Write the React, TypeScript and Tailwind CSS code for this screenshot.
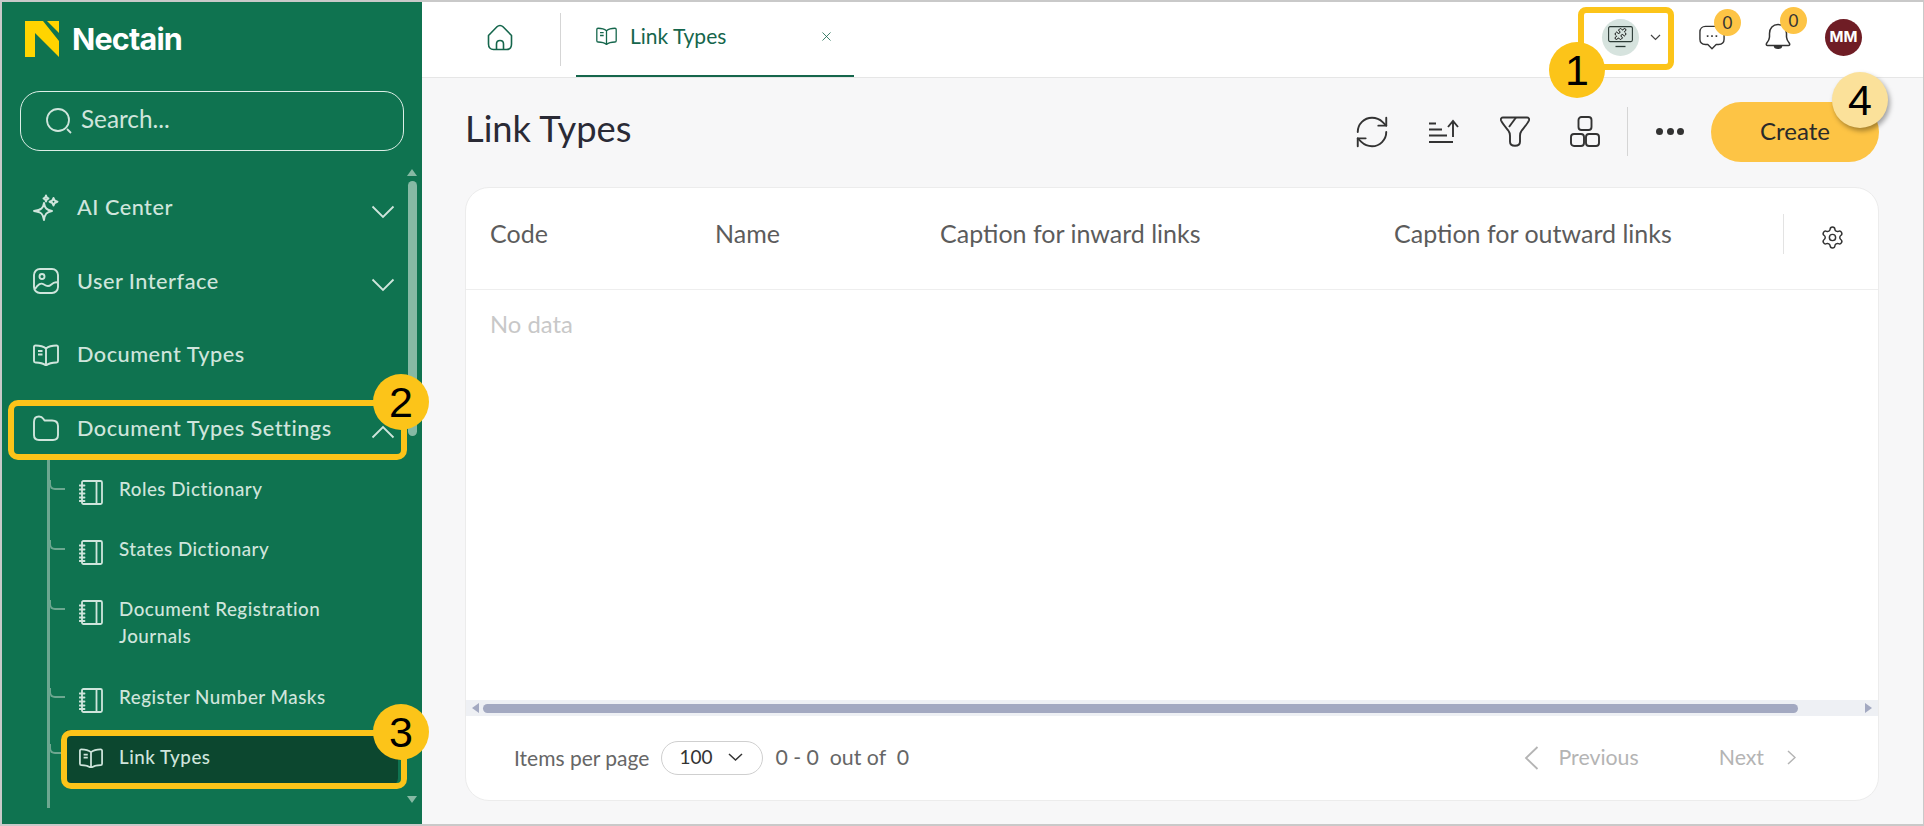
import { Puzzle, RefreshCw, Settings, X } from "lucide-react";
import type { ReactNode } from "react";

const Chevron = ({ up = false }: { up?: boolean }) => (
  <svg width="24" height="14" viewBox="0 0 24 14" fill="none" stroke="currentColor" strokeWidth="1.8" className="shrink-0">
    <path d={up ? "M1.5 12.5 12 2l10.5 10.5" : "M1.5 1.5 12 12 22.5 1.5"} />
  </svg>
);

const Logo = () => (
  <svg width="34" height="36" viewBox="0 0 34 36" className="shrink-0">
    <path d="M0 0h18l16 20v16L10 12v24H0z" fill="#ffd400" />
    <path d="M22 0h12v12z" fill="#ffd400" />
  </svg>
);

const Sparkles = () => (
  <svg width="26" height="28" viewBox="0 0 26 28" fill="none" stroke="currentColor" strokeWidth="1.9" strokeLinejoin="round">
    <path d="M11 9c.8 5 2.600 7 8 8-5.400 1-7.200 3-8 9-.8-6-2.600-8-10-9 7.400-1 9.200-3 10-8z" />
    <path d="M13 1.500c.3 2 1 2.700 2.500 3-1.500.3-2.200 1-2.500 3-.3-2-1-2.700-2.500-3 1.500-.3 2.200-1 2.500-3z" />
    <path d="M20.500 4c.4 2.400 1.200 3.200 4 3.700-2.800.5-3.600 1.300-4 3.800-.4-2.500-1.200-3.300-4-3.800 2.800-.5 3.600-1.300 4-3.700z" />
  </svg>
);

const ImageIcon = () => (
  <svg width="26" height="26" viewBox="0 0 26 26" fill="none" stroke="currentColor" strokeWidth="1.9">
    <rect x="1" y="1" width="24" height="24" rx="6" />
    <circle cx="9" cy="8.500" r="2.500" />
    <path d="M2 21c3-5 6-6.500 9-4.500s5 2 7 .2 4-3.200 6.500-2.200" />
  </svg>
);

const BookIcon = ({ size = 26, stroke = 1.9 }: { size?: number; stroke?: number }) => (
  <svg width={size} height={size * 0.85} viewBox="0 0 26 22" fill="none" stroke="currentColor" strokeWidth={stroke} strokeLinejoin="round" className="shrink-0">
    <path d="M13 4.500C10 2 6 1.500 2.500 1.500 1.500 1.500 1 2 1 3v14c0 1 .5 1.500 1.500 1.500 4 0 7.500.5 10.500 3 3-2.500 6.500-3 10.500-3 1 0 1.500-.5 1.500-1.500V3c0-1-.5-1.500-1.500-1.500-3.500 0-7.500.5-10.500 3zM13 4.500v17" />
    <path d="M5 7h4.500M5 10.500h4.500" />
  </svg>
);

const FolderIcon = () => (
  <svg width="26" height="26" viewBox="0 0 26 26" fill="none" stroke="currentColor" strokeWidth="1.9" strokeLinejoin="round">
    <path d="M1 7c0-3.500 2-5.500 5-5.500 2.500 0 3.500 1 4.500 2.500l1 1.500h7.500c3.500 0 6 2 6 5.500v9c0 3-2 5-5 5H6c-3 0-5-2-5-5z" />
  </svg>
);

const NotebookIcon = () => (
  <svg width="24" height="25" viewBox="0 0 24 25" fill="none" stroke="currentColor" strokeWidth="1.8" strokeLinejoin="round" className="shrink-0">
    <rect x="3" y="1" width="20" height="23" rx="1.500" />
    <path d="M17.500 1v23" />
    <path d="M.500 5.500h5M.500 9.500h5M.500 13.500h5M.500 17.500h5M.500 21h5" strokeLinecap="round" />
  </svg>
);

const Callout = ({ n, className }: { n: string; className: string }) => (
  <div className={`absolute flex h-14 w-14 items-center justify-center rounded-full font-['Liberation_Sans',sans-serif] text-[43px] leading-none text-black ${className}`}>
    {n}
  </div>
);

const NavRow = ({ icon, label, chevron }: { icon: ReactNode; label: string; chevron?: "up" | "down" }) => (
  <div className="flex h-[73.5px] items-center pl-[31px] pr-[12px]">
    <span className="flex w-[44px] shrink-0">{icon}</span>
    <span className="flex-1 text-[21.7px] font-medium tracking-[0.5px]">{label}</span>
    {chevron && (
      <span className="mt-[8px]">
        <Chevron up={chevron === "up"} />
      </span>
    )}
  </div>
);

const SubRow = ({ label, tall, active }: { label: string; tall?: boolean; active?: boolean }) => {
  if (active) {
    return (
      <div className="relative ml-[64px] mr-[9px] mt-[4px] flex h-[56px] items-start rounded-b-lg bg-[#0c472f] pl-[13px] pt-[13px]">
        <span className="absolute -left-[17px] top-[14px] h-[10px] w-[15px] rounded-bl-[6px] border-b-2 border-l-2 border-[#6da790]" />
        <span className="mt-[5px] flex w-[40px] shrink-0">
          <BookIcon size={24} />
        </span>
        <span className="text-[18.800px] font-medium leading-[27px] tracking-[0.5px]">{label}</span>
      </div>
    );
  }
  return (
    <div className={`relative ml-[66px] flex items-start pl-[11px] pt-[17px] ${tall ? "h-[88px]" : "h-[60px]"}`}>
      <span className="absolute -left-[19px] top-[22px] h-[10px] w-[16px] rounded-bl-[6px] border-b-2 border-l-2 border-[#6da790]" />
      <span className="mt-[5px] flex w-[40px] shrink-0">
        <NotebookIcon />
      </span>
      <span className="w-[210px] text-[18.800px] font-medium leading-[27px] tracking-[0.5px]">{label}</span>
    </div>
  );
};

const Sidebar = () => (
  <aside className="flex h-full w-[420px] shrink-0 flex-col bg-[#0f7350] text-[#cfe5dc]">
    <div className="flex h-[89px] shrink-0 items-start gap-[13px] pl-[23px] pt-[19px]">
      <Logo />
      <span className="font-['Inter',sans-serif] text-[30.500px] font-bold leading-[36px] tracking-[-0.8px] text-white">Nectain</span>
    </div>
    <div className="mx-[18px] flex h-[60px] shrink-0 items-center gap-[9px] rounded-[20px] border border-[#dcefe7] pl-[25px]">
      <svg width="26" height="26" viewBox="0 0 26 26" fill="none" stroke="currentColor" strokeWidth="1.800">
        <circle cx="12" cy="12" r="11" />
        <path d="m21 21 4 4" />
      </svg>
      <span className="-mt-[4px] text-[24.300px]">Search...</span>
    </div>
    <div className="mt-[15px] flex h-[642px] shrink-0 overflow-hidden">
      <div className="relative flex-1 overflow-hidden pt-[5px]">
        <span className="absolute left-[45px] top-[294px] h-[400px] w-[3px] bg-[#6da790]" />
        <NavRow icon={<Sparkles />} label="AI Center" chevron="down" />
        <NavRow icon={<ImageIcon />} label="User Interface" chevron="down" />
        <NavRow icon={<BookIcon />} label="Document Types" />
        <NavRow icon={<FolderIcon />} label="Document Types Settings" chevron="up" />
        <div className="-mt-[7px]">
          <SubRow label="Roles Dictionary" />
          <SubRow label="States Dictionary" />
          <SubRow tall label="Document Registration Journals" />
          <SubRow label="Register Number Masks" />
          <SubRow active label="Link Types" />
          <SubRow label="" />
        </div>
      </div>
      <div className="flex w-[15px] shrink-0 flex-col items-center pr-[5px] pt-[3px]">
        <span className="h-0 w-0 border-x-[5px] border-b-[7px] border-x-transparent border-b-[#86b9a4]" />
        <span className="mt-[5px] h-[255px] w-[9px] rounded-full bg-[#86b9a4]" />
        <span className="mt-[360px] h-0 w-0 border-x-[5px] border-t-[7px] border-x-transparent border-t-[#86b9a4]" />
      </div>
    </div>
  </aside>
);

const Badge = () => (
  <span className="absolute -right-[16px] -top-[16px] flex h-[27px] w-[27px] items-center justify-center rounded-full bg-[#fdc445] text-[17px] leading-none text-[#333]">0</span>
);

const Header = () => (
  <header className="flex h-[76px] shrink-0 items-stretch border-b border-[#e6e6e6] bg-white">
    <div className="flex w-[138px] items-center justify-center pb-[5px] pl-[26px] pr-[8px]">
      <svg width="26" height="27" viewBox="0 0 26 27" fill="none" stroke="#15664c" strokeWidth="1.600" strokeLinejoin="round">
        <path d="M1.500 11.500 10 2.800c1.700-1.700 4.300-1.700 6 0l8.500 8.700V20c0 3.500-2 5.500-5 5.500h-13c-3 0-5-2-5-5.500z" />
        <path d="M9.500 25.500V20c0-2.200 1.500-3.500 3.500-3.500s3.500 1.300 3.500 3.500v5.500" />
      </svg>
    </div>
    <div className="my-[11px] w-px bg-[#d5d5d5]" />
    <div className="relative ml-[15px] flex w-[278px] items-center border-b-[2px] border-[#15664c] pb-[5px] pl-[20px] text-[#15664c]">
      <BookIcon size={21} stroke={1.6} />
      <span className="ml-[13px] text-[21px]">Link Types</span>
      <X size={15} strokeWidth={1.300} className="absolute right-[20px]" />
    </div>
    <div className="ml-auto flex items-center pb-[5px] pr-[61px]">
      <div className="mr-[11px] flex h-[37px] w-[37px] items-center justify-center rounded-full bg-[#d6e3de]">
        <svg width="25" height="22" viewBox="0 0 25 22" fill="none" stroke="#2b3a35" strokeWidth="1.100" strokeLinejoin="round">
          <rect x=".6" y=".6" width="23.800" height="15" rx="1.500" />
          <path d="M7.500 20.500h10" strokeWidth="1.300" />
          <Puzzle x={6} y={1.500} size={13} strokeWidth={1.700} />
        </svg>
      </div>
      <svg width="11" height="7" viewBox="0 0 11 7" fill="none" stroke="#444" strokeWidth="1.200" className="mr-[38px]">
        <path d="m1 1 4.500 4.500L10 1" />
      </svg>
      <div className="relative mr-[40px]">
        <svg width="26" height="25" viewBox="0 0 28 26" fill="none" stroke="#333" strokeWidth="1.500" strokeLinejoin="round" className="block">
          <path d="M7 1h14c3.500 0 6 2.500 6 6v8c0 3.500-2.500 5.500-6 5.500h-2.500L14 25l-4.500-4.500H7c-3.500 0-6-2-6-5.500V7c0-3.500 2.500-6 6-6z" />
          <path d="M9 11.500h.6M13.700 11.500h.6M18.400 11.500h.6" strokeLinecap="round" strokeWidth="1.700" />
        </svg>
        <Badge />
      </div>
      <div className="relative mr-[34px]">
        <svg width="26" height="28" viewBox="0 0 26 28" fill="none" stroke="#333" strokeWidth="1.500" strokeLinejoin="round" className="block">
          <path d="M13 1.500c-5 0-8.500 3.500-8.500 9v3.500c0 2.500-1 4-3 6.500-.5 1 0 2 1 2h21c1 0 1.500-1 1-2-2-2.500-3-4-3-6.500v-3.500c0-5.500-3.500-9-8.500-9z" />
          <path d="M9.500 23c0 3 7 3 7 0z" fill="#333" />
        </svg>
        <Badge />
      </div>
      <div className="flex h-[37px] w-[37px] items-center justify-center rounded-full bg-[#6f1d25] font-['Inter',sans-serif] text-[15px] font-bold text-white">MM</div>
    </div>
  </header>
);

const Toolbar = () => (
  <div className="flex h-[109px] shrink-0 items-center pb-[2px] pl-[43px] pr-[44px] text-[#333]">
    <h1 className="mb-[7px] text-[36.300px] leading-none text-[#2a2a35]">Link Types</h1>
    <div className="ml-auto flex items-center">
      <RefreshCw size={38} strokeWidth={1.200} className="mr-[37px]" />
      <svg width="32" height="26" viewBox="0 0 32 26" fill="none" stroke="currentColor" strokeWidth="1.900" className="mr-[40px]">
        <path d="M1 4.500h7M1 10.500h13M1 16.500h18M1 23h24" />
        <path d="M25 18V2M20 8l5-6 5 6" />
      </svg>
      <svg width="30" height="31" viewBox="0 0 30 31" fill="none" stroke="currentColor" strokeWidth="1.900" strokeLinejoin="round" className="mr-[40px]">
        <path d="M3 1.500h24c1.500 0 2.500 1 2 2.800-1 3-6 8.500-7.500 10.500-1.200 1.500-1.500 3-1.500 5v6c0 2.500-2 4-5 4s-5-1.500-5-4v-6c0-2-.3-3.500-1.500-5C7 12.800 2 7.300 1 4.300 .5 2.500 1.500 1.500 3 1.500z" />
        <path d="M16 1.500 9 11" />
      </svg>
      <svg width="30" height="31" viewBox="0 0 30 31" fill="none" stroke="currentColor" strokeWidth="1.900" className="mr-[27px]">
        <rect x="8.500" y="1" width="13" height="13" rx="3" />
        <rect x="1" y="18" width="13" height="12" rx="3" />
        <rect x="16" y="18" width="13" height="12" rx="3" />
      </svg>
      <div className="mr-[28px] h-[49px] w-px bg-[#d5d5d5]" />
      <div className="mr-[27px] flex gap-[3.500px]">
        <span className="h-[7px] w-[7px] rounded-full bg-[#333]" />
        <span className="h-[7px] w-[7px] rounded-full bg-[#333]" />
        <span className="h-[7px] w-[7px] rounded-full bg-[#333]" />
      </div>
      <button className="h-[60px] w-[168px] rounded-full bg-[#fdc445] pb-[2px] text-[24px] text-[#2a2a2a]">Create</button>
    </div>
  </div>
);

const TableCard = () => (
  <div className="ml-[43px] mr-[44px] flex h-[614px] flex-col overflow-hidden rounded-[24px] border border-[#ececec] bg-white">
    <div className="flex h-[102px] shrink-0 items-center border-b border-[#eeeeee] pb-[9px] text-[25px] text-[#5c5c5c]">
      <span className="w-[249px] shrink-0 pl-[24px]">Code</span>
      <span className="w-[225px] shrink-0">Name</span>
      <span className="w-[454px] shrink-0">Caption for inward links</span>
      <span className="w-[389px] shrink-0">Caption for outward links</span>
      <span className="h-[40px] w-px bg-[#e3e3e3]" />
      <Settings size={25} strokeWidth={1.400} className="ml-[36px] mt-[6px] text-[#333]" />
    </div>
    <div className="flex-1 pl-[24px] pt-[17px] text-[23.800px] text-[#c8c8c8]">No data</div>
    <div className="flex h-[16px] shrink-0 items-center bg-[#eef0f4] px-[6px]">
      <span className="h-0 w-0 border-y-[5px] border-r-[7px] border-y-transparent border-r-[#a3a9c1]" />
      <span className="ml-[4px] h-[9px] w-[1315px] rounded-full bg-[#a3a9c1]" />
      <span className="ml-auto h-0 w-0 border-y-[5px] border-l-[7px] border-y-transparent border-l-[#a3a9c1]" />
    </div>
    <div className="flex h-[84px] shrink-0 items-center pb-[1px] pl-[48px] text-[21.300px] text-[#666]">
      <span className="text-[21px]">Items per page</span>
      <div className="ml-[12px] flex h-[34px] w-[102px] items-center rounded-full border border-[#cfcfcf] pl-[17px] text-[#333]">
        <span className="text-[19px]">100</span>
        <svg width="15" height="9" viewBox="0 0 15 9" fill="none" stroke="#333" strokeWidth="1.500" className="ml-[16px]">
          <path d="m1 1 6.500 6L14 1" />
        </svg>
      </div>
      <span className="ml-[12px] whitespace-pre">0 - 0  out of  0</span>
      <div className="ml-auto flex items-center pr-[82px] text-[#b4b4b4]">
        <svg width="15" height="24" viewBox="0 0 15 24" fill="none" stroke="currentColor" strokeWidth="1.800" className="mr-[20px]">
          <path d="M13.500 1 2 12l11.500 11" />
        </svg>
        <span className="mr-[80px]">Previous</span>
        <span className="mr-[23px]">Next</span>
        <svg width="9" height="15" viewBox="0 0 9 15" fill="none" stroke="currentColor" strokeWidth="1.500">
          <path d="m1 1 7 6.500L1 14" />
        </svg>
      </div>
    </div>
  </div>
);

export default function App() {
  return (
    <div className="relative flex h-[826px] w-[1924px] overflow-hidden border-2 border-r-1 border-[#c9c9c9] bg-[#f7f7f8] font-['Lato','Open_Sans',sans-serif]">
      <Sidebar />
      <main className="flex min-w-0 flex-1 flex-col">
        <Header />
        <Toolbar />
        <TableCard />
      </main>
      {/* highlight frames and step numbers, coords are inside the 2px border */}
      <div className="absolute left-[6px] top-[398px] h-[60px] w-[399px] rounded-[10px] border-[6px] border-[#fcc419]" />
      <div className="absolute left-[59px] top-[728px] h-[59px] w-[346px] rounded-[10px] border-[6px] border-[#fcc419]" />
      <div className="absolute left-[1576px] top-[5px] h-[63px] w-[96px] rounded-[8px] border-[6px] border-[#fcc419]" />
      <Callout n="1" className="left-[1547px] top-[40px] bg-[#fcc419]" />
      <Callout n="2" className="left-[371px] top-[372px] bg-[#fcc419]" />
      <Callout n="3" className="left-[371px] top-[702px] bg-[#fcc419]" />
      <Callout n="4" className="left-[1830px] top-[70px] bg-[#fbe19a] shadow-[2px_3px_5px_rgba(0,0,0,0.35)]" />
    </div>
  );
}
